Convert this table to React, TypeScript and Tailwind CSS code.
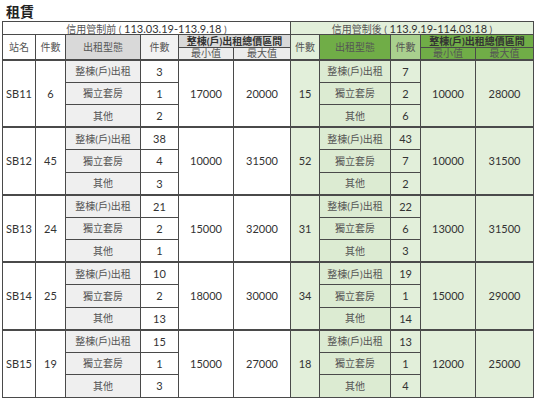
import React from 'react';

type Side = { n: number; types: number[]; min: number; max: number };
type Row = { st: string; before: Side; after: Side };

const rows: Row[] = [
  { st: 'SB11', before: { n: 6, types: [3, 1, 2], min: 17000, max: 20000 }, after: { n: 15, types: [7, 2, 6], min: 10000, max: 28000 } },
  { st: 'SB12', before: { n: 45, types: [38, 4, 3], min: 10000, max: 31500 }, after: { n: 52, types: [43, 7, 2], min: 10000, max: 31500 } },
  { st: 'SB13', before: { n: 24, types: [21, 2, 1], min: 15000, max: 32000 }, after: { n: 31, types: [22, 6, 3], min: 13000, max: 31500 } },
  { st: 'SB14', before: { n: 25, types: [10, 2, 13], min: 18000, max: 30000 }, after: { n: 34, types: [19, 1, 14], min: 15000, max: 29000 } },
  { st: 'SB15', before: { n: 19, types: [15, 1, 3], min: 15000, max: 27000 }, after: { n: 18, types: [13, 1, 4], min: 12000, max: 25000 } },
];

const typeNames = ['整棟(戶)出租', '獨立套房', '其他'];

const cell = 'border border-[#4a4a4a] text-center align-middle p-0';
const num = 'text-[11px] text-[#333]';
const zh = 'text-[10px] text-[#555]';

export default function App() {
  return (
    <div className="w-[536px] h-[402px] bg-white overflow-hidden font-['Lato','Noto_Sans_CJK_TC',sans-serif] leading-none">
      <div className="pl-[6px] pt-[4px] h-[21px] text-[14px] font-bold text-[#222] font-['Noto_Sans_CJK_TC',sans-serif]">租賃</div>
      <table className="ml-[2px] w-[531px] table-fixed border-collapse border border-[#4a4a4a]">
        <colgroup>
          <col className="w-[33px]" />
          <col className="w-[30px]" />
          <col className="w-[75px]" />
          <col className="w-[38px]" />
          <col className="w-[55px]" />
          <col className="w-[57px]" />
          <col className="w-[29px]" />
          <col className="w-[71px]" />
          <col className="w-[30px]" />
          <col className="w-[55px]" />
          <col className="w-[58px]" />
        </colgroup>
        <thead>
          <tr className="h-[13px]">
            <th colSpan={6} className={`${cell} ${zh} font-normal bg-white`}>
              信用管制前 ( <span className={num}>113.03.19-113.9.18</span> )
            </th>
            <th colSpan={5} className={`${cell} ${zh} font-normal bg-[#e2efda]`}>
              信用管制後 ( <span className={num}>113.9.19-114.03.18</span> )
            </th>
          </tr>
          <tr className="h-[13px]">
            <th rowSpan={2} className={`${cell} ${zh} font-normal bg-white`}>站名</th>
            <th rowSpan={2} className={`${cell} ${zh} font-normal bg-white`}>件數</th>
            <th rowSpan={2} className={`${cell} ${zh} font-normal bg-[#d9d9d9]`}>出租型態</th>
            <th rowSpan={2} className={`${cell} ${zh} font-normal bg-[#f2f2f2]`}>件數</th>
            <th colSpan={2} className={`${cell} text-[10px] text-[#333] font-bold bg-[#d9d9d9]`}>整棟(戶)出租總價區間</th>
            <th rowSpan={2} className={`${cell} ${zh} font-normal bg-[#e2efda]`}>件數</th>
            <th rowSpan={2} className={`${cell} ${zh} font-normal bg-[#70ad47] text-[#3a3a3a]`}>出租型態</th>
            <th rowSpan={2} className={`${cell} ${zh} font-normal bg-[#a9d08e]`}>件數</th>
            <th colSpan={2} className={`${cell} text-[10px] text-[#333] font-bold bg-[#70ad47]`}>整棟(戶)出租總價區間</th>
          </tr>
          <tr className="h-[12px]">
            <th className={`${cell} ${zh} font-normal bg-[#ececec]`}>最小值</th>
            <th className={`${cell} ${zh} font-normal bg-[#ececec]`}>最大值</th>
            <th className={`${cell} ${zh} font-normal bg-[#70ad47] text-[#3a3a3a]`}>最小值</th>
            <th className={`${cell} ${zh} font-normal bg-[#70ad47] text-[#3a3a3a]`}>最大值</th>
          </tr>
        </thead>
        <tbody>
          {rows.map((r) =>
            typeNames.map((t, i) => (
              <tr key={r.st + i} className={`h-[22.5px] ${i === 0 ? 'border-t-2 border-[#4a4a4a]' : ''}`}>
                {i === 0 && (
                  <>
                    <td rowSpan={3} className={`${cell} ${num} bg-white`}>{r.st}</td>
                    <td rowSpan={3} className={`${cell} ${num} bg-white`}>{r.before.n}</td>
                  </>
                )}
                <td className={`${cell} ${zh} bg-[#efefef]`}>{t}</td>
                <td className={`${cell} ${num} bg-white`}>{r.before.types[i]}</td>
                {i === 0 && (
                  <>
                    <td rowSpan={3} className={`${cell} ${num} bg-white`}>{r.before.min}</td>
                    <td rowSpan={3} className={`${cell} ${num} bg-white`}>{r.before.max}</td>
                    <td rowSpan={3} className={`${cell} ${num} bg-[#e2efda]`}>{r.after.n}</td>
                  </>
                )}
                <td className={`${cell} ${zh} bg-[#dcebd2]`}>{t}</td>
                <td className={`${cell} ${num} bg-[#e2efda]`}>{r.after.types[i]}</td>
                {i === 0 && (
                  <>
                    <td rowSpan={3} className={`${cell} ${num} bg-[#e2efda]`}>{r.after.min}</td>
                    <td rowSpan={3} className={`${cell} ${num} bg-[#e2efda]`}>{r.after.max}</td>
                  </>
                )}
              </tr>
            ))
          )}
        </tbody>
      </table>
    </div>
  );
}
